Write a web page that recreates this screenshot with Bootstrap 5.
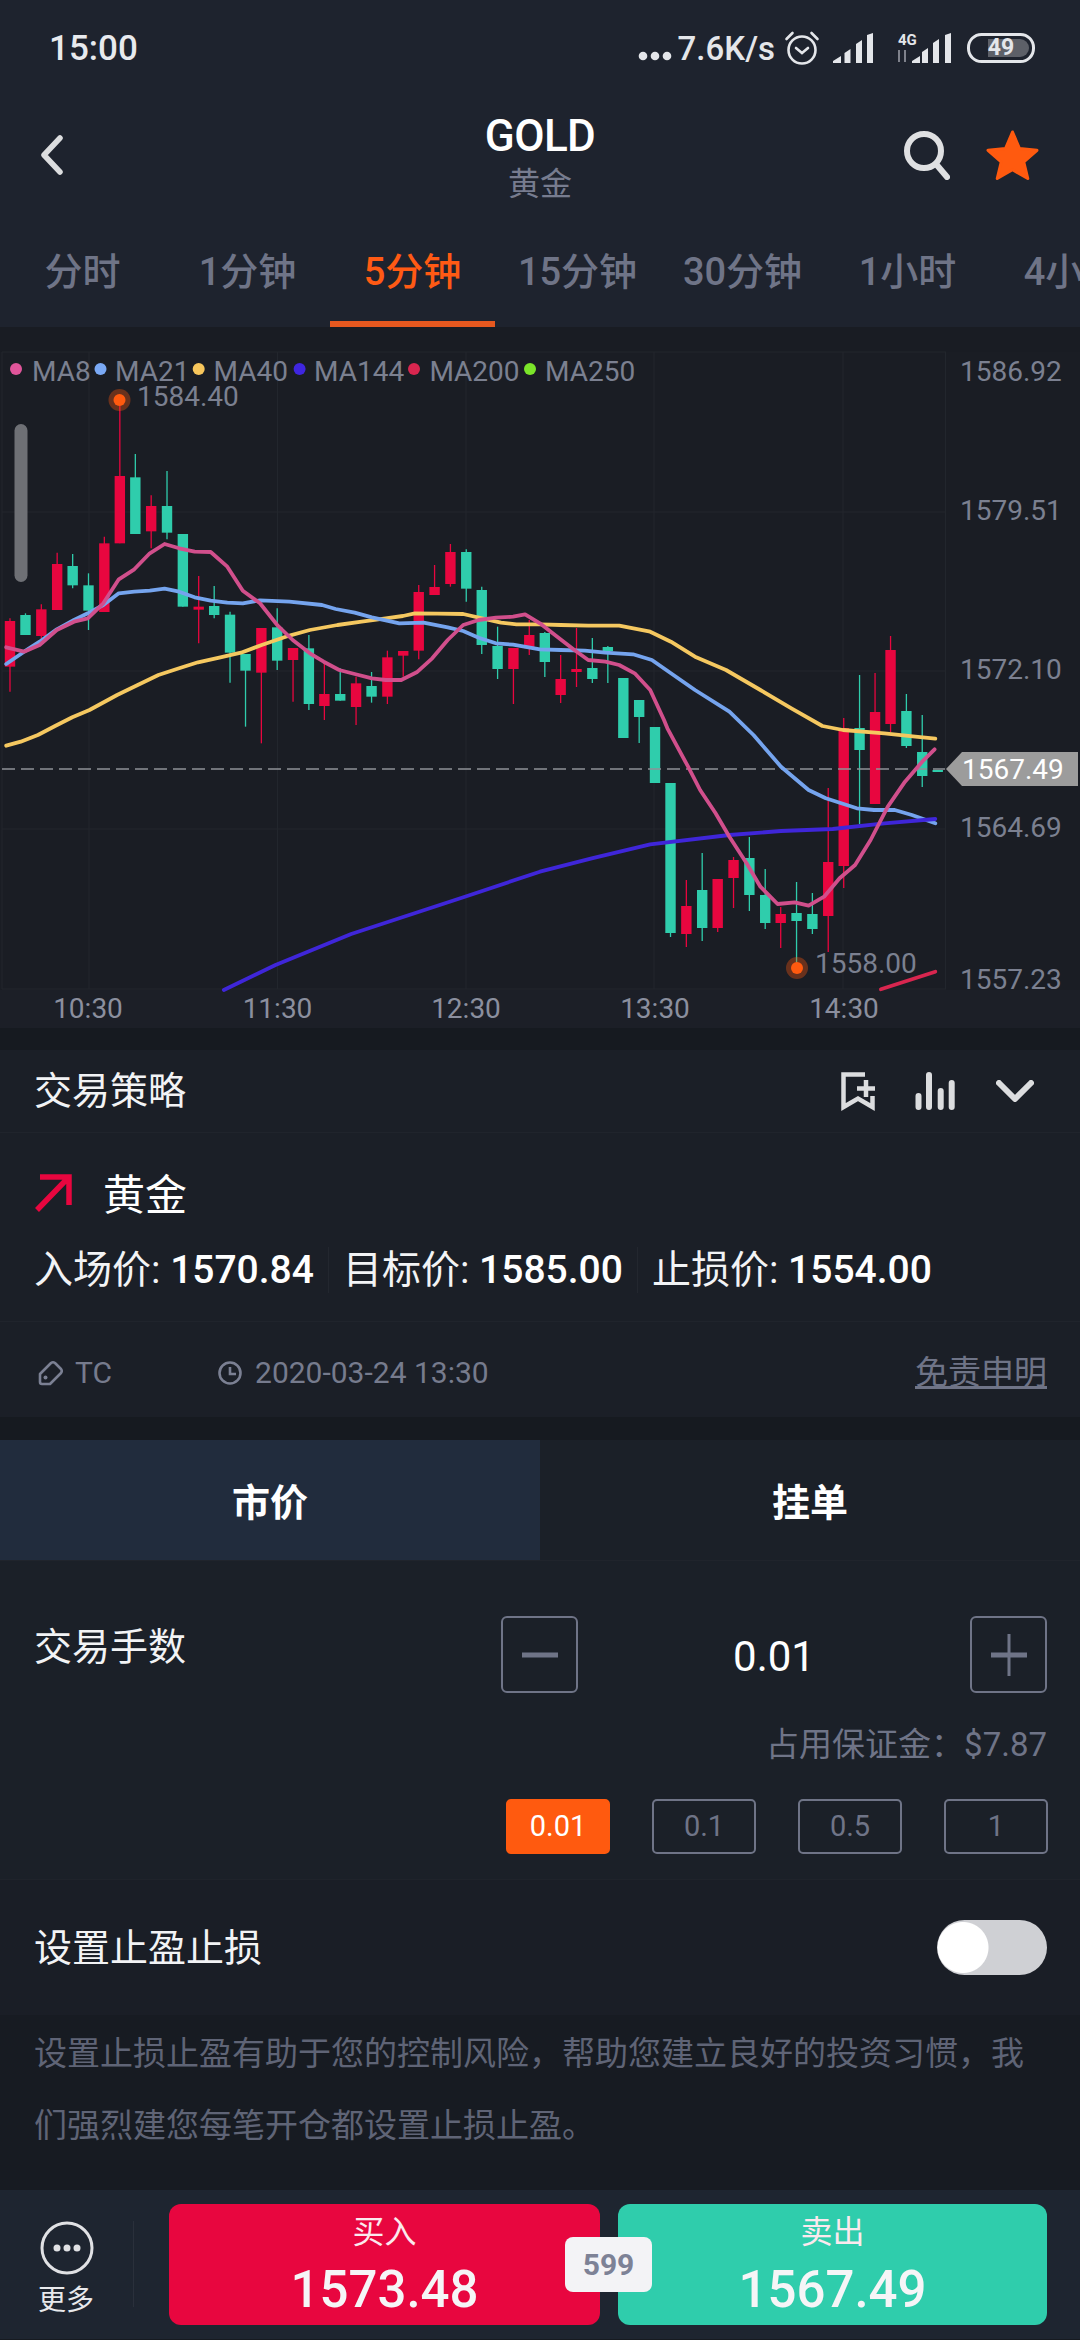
<!DOCTYPE html>
<html lang="zh-CN">
<head>
<meta charset="UTF-8">
<meta name="viewport" content="width=device-width, initial-scale=1.0">
<title>GOLD</title>
<link href="https://cdn.jsdelivr.net/npm/bootstrap@5.3.0/dist/css/bootstrap.min.css" rel="stylesheet">
<style>
    body {
        margin: 0;
        background: #161a20;
        font-family: Roboto, "Noto Sans CJK SC", sans-serif;
        color: #f2f3f5;
    }
    .app { width: 1080px; height: 2340px; overflow: hidden; }

    /* top */
    .top-area { background: #1e232e; height: 327px; }
    .status-row { height: 96px; padding: 0 45px 0 49px; }
    .clock-text { font-size: 35px; font-weight: 500; line-height: 1; color: #e8eaee; }
    .speed-text { font-size: 33px; font-weight: 500; line-height: 1; color: #e4e6ea; }
    .alarm-ico { margin-left: 9px; }
    .bars-ico { margin-left: 13px; }
    .net-ico { margin-left: 21px; }
    .batt-box { width: 68px; height: 30px; margin-left: 15px; position: relative; }
    .batt-num { position: absolute; top: 0; left: 0; width: 100%; text-align: center; font-size: 23px; line-height: 30px; font-weight: 700; color: #e4e6ea; }
    .title-row { height: 136px; padding: 0 41px 18px 40px; position: relative; }
    .title-main { position: absolute; left: 0; right: 0; top: 17px; text-align: center; }
    .gold-text { font-size: 44px; line-height: 46px; font-weight: 500; color: #fff; letter-spacing: -.6px; }
    .gold-sub { font-size: 32px; line-height: 48px; margin-top: 1px; color: #777c8f; }
    .title-tools { gap: 36px; position: relative; }
    .period-tab { width: 165px; flex: none; height: 95px; line-height: 81px; text-align: center; font-size: 38px; font-weight: 500; color: #6f7487; }
    .period-tab.on { color: #ff5a14; border-bottom: 6px solid #e6581f; }

    /* chart */
    .chart-box { background: #1a1d24; height: 701px; }
    .chart-box svg { display: block; }
    .chart-txt { font-family: Roboto, sans-serif; font-size: 28px; fill: #7b8090; }
    .chart-gap { height: 22px; }

    /* strategy */
    .plan-box { background: #1b1f27; }
    .plan-head { height: 83px; padding: 0 46px 0 34px; border-bottom: 1px solid #20242c; }
    .big-text { font-size: 38px; line-height: 46px; color: #f2f3f5; }
    .bars-tool { margin-left: 39px; }
    .down-tool { margin-left: 41px; }
    .plan-body { height: 189px; padding: 0 34px; border-bottom: 1px solid #20242c; }
    .plan-name { padding-top: 40px; height: 114px; }
    .plan-name b { font-size: 42px; line-height: 46px; font-weight: 400; color: #fff; margin-left: 31px; }
    .price-item { font-size: 39px; line-height: 46px; padding-right: 14px; margin-right: 14px; border-right: 1px solid #23272f; white-space: nowrap; }
    .price-item:last-child { border: 0; }
    .price-item b { font-weight: 500; color: #fff; }
    .plan-meta { height: 95px; padding: 6px 33px 0 37px; color: #767b8d; font-size: 30px; }
    .plan-meta a { color: #6f7487; font-size: 33px; }
    .meta-txt { margin-left: 12px; }
    .clock-ico { margin-left: 105px; }
    .gap-strip { height: 23px; }

    /* order */
    .order-tab { height: 121px; line-height: 126px; text-align: center; font-size: 38px; font-weight: 700; color: #fff; background: #1b2028; border-bottom: 1px solid #20242c; }
    .order-tab.on { background: #212c3d; }
    .order-box { height: 319px; background: #1b2028; padding: 55px 33px 0 34px; border-bottom: 1px solid #1f232b; position: relative; }
    .lots-label { padding-top: 8px; }
    .step-btn { width: 77px; height: 77px; padding: 0; border: 2px solid #6f7487; border-radius: 6px; display: flex; align-items: center; justify-content: center; background: transparent; }
    .lots-num { width: 392px; text-align: center; font-size: 42px; line-height: 82px; color: #fff; }
    .margin-line { font-size: 33px; line-height: 46px; color: #6f7487; text-align: right; margin-top: 24px; }
    .lot-chip { width: 104px; height: 55px; padding: 0; font-size: 29px; line-height: 51px; color: #6f7487; border: 2px solid #6f7487; border-radius: 5px; background: transparent; }
    .lot-chip.on { background: #ff5a0f; border-color: #ff5a0f; color: #fff; }
    .lot-chips { margin: 31px -1px 0 0; gap: 42px; }

    .stop-row { height: 135px; background: #1a1e26; padding: 0 33px 0 34px; }
    .stop-row .form-check-input { width: 110px; height: 55px; margin: 0; border: 0; float: none; background-color: #cfd0d4; background-image: radial-gradient(circle at 26px 50%, #fff 25px, transparent 26px); background-size: auto; }
    .stop-row .form-switch { padding: 0; min-height: 0; margin: 0; line-height: 0; }
    .stop-note { height: 175px; background: #171b22; padding: 3px 33px 0 34px; font-size: 33px; line-height: 72px; color: #5f6476; }

    /* bottom */
    .bottom-bar { height: 149px; background: #1e2530; padding: 14px 33px 0 0; position: relative; }
    .more-box { width: 134px; height: 86px; margin-top: 17px; border-right: 1px solid #2a303b; flex: none; text-align: center; }
    .more-box span { display: block; font-size: 28px; line-height: 34px; color: #e8e9ec; margin-top: 9px; padding-right: 1px; }
    .deal-btn { width: 431px; height: 121px; padding: 0; border: 0; border-radius: 12px; color: #fff; text-align: center; }
    .deal-btn small { display: block; font-size: 32px; line-height: 40px; margin-bottom: 10px; color: #fbe9ee; }
    .deal-btn b { display: block; font-size: 51px; line-height: 56px; font-weight: 500; color: #f5f5f7; }
    .buy-btn { background: #e8063f; margin-left: 35px; }
    .sell-btn { background: #2fcdac; width: 429px; margin-left: 18px; }
    .spread-tag { position: absolute; left: 565px; top: 47px; width: 87px; height: 55px; line-height: 55px; text-align: center; background: #f3f3f6; border-radius: 8px; color: #7d8296; font-size: 30px; font-weight: 700; }
</style>
</head>
<body>
<div class="app d-flex flex-column">

    <div class="top-area">
        <div class="status-row d-flex align-items-center justify-content-between">
            <span class="clock-text">15:00</span>
            <div class="d-flex align-items-center">
                <svg width="36" height="12" viewBox="0 0 36 12" class="me-1 mt-3"><circle cx="5" cy="6" r="4.300" fill="#e4e6ea"/><circle cx="17" cy="6" r="4.300" fill="#e4e6ea"/><circle cx="29" cy="6" r="4.300" fill="#e4e6ea"/></svg>
                <span class="speed-text">7.6K/s</span>
                <svg width="36" height="36" viewBox="0 0 36 36" class="alarm-ico" fill="none" stroke="#e4e6ea" stroke-width="2.600"><circle cx="18" cy="20" r="13.500"/><path d="M12 18l6 5 6-5M2.500 9l6-6M33.500 9l-6-6" stroke-linecap="round"/></svg>
                <svg width="40" height="30" viewBox="0 0 40 30" class="bars-ico" fill="#e4e6ea"><path d="M0 30v-2l8-5v7zM11.500 30V20l6-4v14zM23 30V11l6-4v23zM34 30V2l6-2v30z"/></svg>
                <svg width="58" height="32" viewBox="0 0 58 32" class="net-ico" fill="#e4e6ea"><text x="4" y="13" font-family="Roboto" font-size="15" font-weight="700" fill="#e4e6ea">4G</text><path d="M5 30V18M11 18v12" stroke="#7f828c" stroke-width="2"/><path d="M18 31v-2l8-5v7zM28 31V20l6-4v15zM39 31V11l6-4v24zM51 31V3l6-2v30z"/></svg>
                <div class="batt-box">
                    <svg width="68" height="30" viewBox="0 0 68 30" class="d-block"><rect x="1.500" y="1.500" width="65" height="27" rx="13" fill="none" stroke="#e4e6ea" stroke-width="3"/><path d="M21 6h32a9 9 0 0 1 0 18H21z" fill="#5d6068"/></svg>
                    <span class="batt-num">49</span>
                </div>
            </div>
        </div>
        <div class="title-row d-flex align-items-center justify-content-between">
            <svg width="24" height="40" viewBox="0 0 24 40" fill="none" stroke="#dcdddf" stroke-width="5.500" stroke-linecap="round" stroke-linejoin="round"><path d="M20 3L4 20l16 17"/></svg>
            <div class="title-main">
                <div class="gold-text">GOLD</div>
                <div class="gold-sub">黄金</div>
            </div>
            <div class="title-tools d-flex align-items-center">
                <svg width="47" height="50" viewBox="0 0 47 50" fill="none" stroke="#dfe0e2" stroke-width="6" stroke-linecap="round"><circle cx="21" cy="21" r="17"/><path d="M33 34l11 13"/></svg>
                <svg width="53" height="50" viewBox="0 0 53 50" fill="#ff5a0f" stroke="#ff5a0f" stroke-width="3" stroke-linejoin="round"><path d="M26.500 2l7 16.500 17.500 1.800-13.200 11.700 4 16.500-15.300-8.700-15.300 8.700 4-16.500L2 20.300l17.500-1.800z"/></svg>
            </div>
        </div>
        <div class="d-flex overflow-hidden">
            <div class="period-tab">分时</div>
            <div class="period-tab">1分钟</div>
            <div class="period-tab on">5分钟</div>
            <div class="period-tab">15分钟</div>
            <div class="period-tab">30分钟</div>
            <div class="period-tab">1小时</div>
            <div class="period-tab">4小时</div>
        </div>
    </div>

    <div class="chart-box">
        <svg id="chart" width="1080" height="701" viewBox="0 327 1080 701"></svg>
    </div>
    <div class="chart-gap"></div>

    <div class="plan-box">
        <div class="plan-head d-flex align-items-center justify-content-between">
            <span class="big-text">交易策略</span>
            <div class="d-flex align-items-center">
                <svg width="36" height="40" viewBox="0 0 36 40" fill="none" stroke="#dcdddf" stroke-width="4.500"><path d="M25 3.500H3.500V36L18 27.500 32.500 36V25"/><path d="M26 9v17M17 17.500h18"/></svg>
                <svg width="40" height="40" viewBox="0 0 40 40" class="bars-tool" fill="none" stroke="#dcdddf" stroke-width="6" stroke-linecap="round"><path d="M3.500 25v11M14 4v32M25.700 20v16M36.700 12v24"/></svg>
                <svg width="38" height="22" viewBox="0 0 38 22" class="down-tool" fill="none" stroke="#dcdddf" stroke-width="6" stroke-linecap="round" stroke-linejoin="round"><path d="M3 3l16 16L35 3"/></svg>
            </div>
        </div>
        <div class="plan-body">
            <div class="plan-name d-flex align-items-start">
                <svg width="38" height="40" viewBox="0 0 38 40" fill="none" stroke="#e8063f" stroke-width="5.500"><path d="M3 37L34 5M6 4h29v28"/></svg>
                <b>黄金</b>
            </div>
            <div class="d-flex">
                <span class="price-item">入场价: <b>1570.84</b></span>
                <span class="price-item">目标价: <b>1585.00</b></span>
                <span class="price-item">止损价: <b>1554.00</b></span>
            </div>
        </div>
        <div class="plan-meta d-flex align-items-center">
            <svg width="26" height="26" viewBox="0 0 26 26" fill="none" stroke="#7b8093" stroke-width="2.600" stroke-linejoin="round"><path d="M3 14L14 3q2-1.500 4 0l6 6q1.500 2 0 4L13 24H5q-2 0-2-2z"/><circle cx="8.500" cy="17.500" r="2" fill="#7b8093" stroke="none"/></svg>
            <span class="meta-txt">TC</span>
            <svg width="26" height="26" viewBox="0 0 26 26" class="clock-ico" fill="none" stroke="#7b8093" stroke-width="2.600"><circle cx="13" cy="13" r="10.500"/><path d="M13 7v7h6"/></svg>
            <span class="meta-txt flex-grow-1">2020-03-24 13:30</span>
            <a href="#">免责申明</a>
        </div>
    </div>
    <div class="gap-strip"></div>

    <div class="row g-0">
        <div class="col-6"><div class="order-tab on">市价</div></div>
        <div class="col-6"><div class="order-tab">挂单</div></div>
    </div>

    <div class="order-box">
        <div class="d-flex justify-content-between align-items-start">
            <span class="big-text lots-label">交易手数</span>
            <div class="d-flex">
                <button class="step-btn" type="button"><svg width="40" height="40" viewBox="0 0 40 40" stroke="#6f7487" stroke-width="5"><path d="M2 20h36"/></svg></button>
                <div class="lots-num">0.01</div>
                <button class="step-btn" type="button"><svg width="40" height="44" viewBox="0 0 40 44" stroke="#6f7487" fill="none"><path d="M2 22h36" stroke-width="5"/><path d="M20 1v42" stroke-width="3"/></svg></button>
            </div>
        </div>
        <div class="margin-line">占用保证金：$7.87</div>
        <div class="lot-chips d-flex justify-content-end">
            <button class="btn lot-chip on" type="button">0.01</button>
            <button class="btn lot-chip" type="button">0.1</button>
            <button class="btn lot-chip" type="button">0.5</button>
            <button class="btn lot-chip" type="button">1</button>
        </div>
    </div>

    <div class="stop-row d-flex align-items-center justify-content-between">
        <span class="big-text">设置止盈止损</span>
        <div class="form-check form-switch">
            <input class="form-check-input" type="checkbox" role="switch">
        </div>
    </div>
    <div class="stop-note">设置止损止盈有助于您的控制风险，帮助您建立良好的投资习惯，我们强烈建您每笔开仓都设置止损止盈。</div>

    <div class="bottom-bar d-flex">
        <div class="more-box">
            <svg width="54" height="54" viewBox="0 0 54 54" fill="none" stroke="#e0e1e4" stroke-width="3"><circle cx="27" cy="27" r="25"/><g fill="#e0e1e4" stroke="none"><circle cx="17" cy="27" r="3.500"/><circle cx="27" cy="27" r="3.500"/><circle cx="37" cy="27" r="3.500"/></g></svg>
            <span>更多</span>
        </div>
        <button class="deal-btn buy-btn" type="button"><small>买入</small><b>1573.48</b></button>
        <button class="deal-btn sell-btn" type="button"><small>卖出</small><b>1567.49</b></button>
        <div class="spread-tag">599</div>
    </div>
</div>

<script src="https://cdn.jsdelivr.net/npm/bootstrap@5.3.0/dist/js/bootstrap.bundle.min.js"></script>
<script>
    var RED = '#e8063f', GREEN = '#2fcdac';

    // points were read off zoomed crops, so these put them back on the page
    function left(x, y) { return [x / 2.904, 340 + y / 3]; }
    function right(x, y) { return [540 + x / 2.904, 340 + y / 3]; }
    function leftLow(x, y) { return [x / 2.904, 700 + y / 3]; }
    function rightLow(x, y) { return [540 + x / 2.904, 700 + y / 3]; }

    function mapPts(fn, list) {
        return list.map(function (p) { return fn(p[0], p[1]); });
    }

    // x, bodyTop, bodyBottom, wickTop, wickBottom, red?
    var leftCandles = [
        [29,843,980,835,1055,1],[74,825,885,820,885,0],[120,808,888,793,900,1],[166,672,810,638,810,1],
        [211,678,736,642,745,0],[257,736,812,700,870,0],[303,610,816,590,816,1],[348,408,610,180,610,1],
        [393,412,582,342,582,0],[439,498,574,466,625,1],[485,498,578,393,598,0],[531,582,800,582,800,0],
        [577,800,809,708,910,1],[622,798,825,738,835,0],[668,824,938,815,1028,0],[713,942,992,942,1160,0],
        [759,864,998,864,1210,1],[805,862,962,805,990,0],[851,924,960,924,1085,1],[897,925,1092,885,1110,0],
        [942,1062,1098,970,1140,1],[988,1062,1082,985,1082,0],[1034,1030,1101,1010,1155,1],[1079,1038,1070,996,1088,0],
        [1125,952,1070,932,1092,1],[1171,933,947,933,1010,1],[1216,756,932,735,958,1],[1262,741,765,675,765,1],
        [1308,636,732,612,740,1],[1354,636,746,628,785,0],[1399,750,915,740,942,0],[1445,918,987,860,1017,0],
        [1491,924,987,924,1092,1],[1537,885,925,840,945,1]
    ];
    // same, but x from the right crop and y already in page pixels
    var rightCandles = [
        [14,633,662,632,677,0],[60,679,695,655,703,1],[106,669,672,628,687,1],[152,668,679,638,683,0],
        [197,647,651,646,683,0],[242,678,738,678,738,0],[288,700,717,700,743,0],[334,727,783,727,783,0],
        [379,783,933,783,937,0],[425,906,934,880,947,1],[471,890,928,853,941,0],[516,879,928,879,932,1],
        [562,860,878,857,908,1],[608,858,895,837,911,0],[654,895,923,869,929,0],[699,914,923,907,948,1],
        [745,913,921,882,963,0],[791,914,929,893,934,0],[837,862,916,788,952,1],[882,728,866,718,888,1],
        [928,728,750,675,824,0],[973,712,804,673,804,1],[1018,650,724,636,732,1],[1064,711,746,694,748,0],
        [1110,752,776,715,787,0],[1155,770,772,770,772,0]
    ];

    var ma8 = mapPts(left, [[18,922],[70,935],[115,915],[165,870],[215,845],[255,835],[300,790],[345,718],[390,688],[435,640],[478,612],[520,625],[565,635],[612,636],[660,680],[705,752],[755,790],[805,855],[850,900],[900,940],[940,965],[985,990],[1030,1002],[1080,1015],[1120,1020],[1165,1020],[1210,997],[1255,955],[1300,900],[1345,855],[1390,840],[1440,833],[1490,830],[1525,823],[1568,850]])
        .concat(mapPts(right, [[50,890],[100,930],[140,960],[190,965],[230,975],[275,1000],[320,1050],[360,1140]]))
        .concat(mapPts(rightLow, [[370,85],[430,200],[465,270],[510,340],[550,410],[600,490],[640,560],[690,612],[740,607],[780,617],[825,590],[870,535],[915,495],[960,420],[1010,320],[1060,245],[1110,185],[1146,148]]));
    var ma21 = mapPts(left, [[18,972],[70,935],[115,905],[165,868],[215,840],[255,820],[300,795],[345,760],[390,755],[435,752],[478,746],[520,755],[565,772],[612,782],[660,788],[705,790],[755,781],[840,785],[935,795],[975,807],[1030,818],[1080,832],[1160,850],[1230,848],[1300,862],[1345,873],[1390,893],[1440,910],[1490,914],[1568,928]])
        .concat(mapPts(right, [[60,930],[130,932],[190,938],[270,943],[325,960],[380,1000],[450,1050],[550,1115]]))
        .concat(mapPts(rightLow, [[550,35],[620,105],[700,200],[780,270],[830,295],[920,325],[970,330],[1030,330],[1080,345],[1148,370]]));
    var ma40 = mapPts(leftLow, [[18,137],[60,125],[110,105],[160,78],[210,52],[260,30]])
        .concat(mapPts(left, [[340,1065],[400,1035],[460,1005],[520,985],[575,967],[640,952],[700,938],[760,915],[830,890],[900,870],[980,855],[1050,845],[1120,835],[1170,828],[1205,820],[1270,821],[1345,822],[1400,835],[1455,848],[1500,853],[1568,853]]))
        .concat(mapPts(right, [[60,855],[140,857],[230,857],[320,875],[380,905],[450,950],[540,990],[640,1050],[730,1105],[820,1158],[880,1170],[1000,1180],[1090,1190],[1148,1196]]));
    var ma144 = mapPts(leftLow, [[650,870],[800,795],[1020,702],[1350,590],[1568,515]])
        .concat(mapPts(rightLow, [[150,475],[320,433],[550,405],[700,393],[850,387],[1000,370],[1148,357]]));
    var ma200 = mapPts(rightLow, [[990,868],[1148,815]]);

    function line(x1, y1, x2, y2, color, w, extra) {
        return '<line x1="' + x1 + '" y1="' + y1 + '" x2="' + x2 + '" y2="' + y2 + '" stroke="' + color + '" stroke-width="' + w + '" ' + (extra || '') + '/>';
    }
    function label(x, y, str, anchor, fill) {
        return '<text class="chart-txt" x="' + x + '" y="' + y + '"' + (anchor ? ' text-anchor="' + anchor + '"' : '') + (fill ? ' style="fill:' + fill + '"' : '') + '>' + str + '</text>';
    }
    function candle(x, c) {
        var color = c[5] ? RED : GREEN;
        return line(x, c[3], x, c[4], color, 1.3) +
            '<rect x="' + (x - 5.2) + '" y="' + c[1] + '" width="10.400" height="' + (c[2] - c[1]) + '" fill="' + color + '"/>';
    }
    function maLine(pts, color) {
        return '<polyline points="' + pts.map(function (p) { return p[0].toFixed(1) + ',' + p[1].toFixed(1); }).join(' ') +
            '" fill="none" stroke="' + color + '" stroke-width="3.800" stroke-linejoin="round" stroke-linecap="round"/>';
    }

    var html = '<rect x="0" y="327" width="1080" height="25" fill="#191c23"/>';

    // grid
    [2, 89, 277.5, 466, 654, 843, 945.5].forEach(function (x) { html += line(x, 352, x, 989, '#22262d', 1); });
    [352, 512, 671, 829, 989].forEach(function (y) { html += line(2, y, 946, y, '#22262d', 1); });
    html += '<rect x="0" y="990" width="1080" height="38" fill="#1c1f27"/>';

    // candles
    leftCandles.forEach(function (c) {
        var x = c[0] / 2.904;
        html += candle(x, [0, 340 + c[1] / 3, 340 + c[2] / 3, 340 + c[3] / 3, 340 + c[4] / 3, c[5]]);
    });
    rightCandles.forEach(function (c) { html += candle(540 + c[0] / 2.904, c); });

    // last price line, under the averages
    html += line(2, 769, 945, 769, '#8f9196', 1.400, 'stroke-dasharray="13 6"');

    html += maLine(ma40, '#f5c860') + maLine(ma21, '#75a4ee') + maLine(ma144, '#3f26d9') + maLine(ma8, '#d14f8c') + maLine(ma200, '#d8264f');

    // scroll handle
    html += '<rect x="14.500" y="424" width="13" height="158" rx="6.500" fill="#6e7075"/>';

    // legend
    [[16, 32, '#e0559a', 'MA8'], [100.5, 115, '#7aa9f5', 'MA21'], [198.7, 213.5, '#f7c65c', 'MA40'],
     [299.6, 314, '#3f26e0', 'MA144'], [414, 429.4, '#d8264f', 'MA200'], [530, 545, '#7be52a', 'MA250']].forEach(function (m) {
        html += '<circle cx="' + m[0] + '" cy="369" r="6" fill="' + m[2] + '"/>' + label(m[1], 381, m[3]);
    });

    // high and low markers
    [[119.5, 400], [797, 968]].forEach(function (d) {
        html += '<circle cx="' + d[0] + '" cy="' + d[1] + '" r="11" fill="#ff5a0f" fill-opacity=".35"/><circle cx="' + d[0] + '" cy="' + d[1] + '" r="6" fill="#ff5a0f"/>';
    });
    html += label(137, 406, '1584.40') + label(815, 973, '1558.00');

    // price axis
    [[381, '1586.92'], [520, '1579.51'], [679, '1572.10'], [837, '1564.69'], [989, '1557.23']].forEach(function (a) {
        html += label(960, a[0], a[1]);
    });
    html += '<polygon points="946,769 962,752 1078,752 1078,786 962,786" fill="#9c9c9c"/>' + label(962, 779, '1567.49', '', '#fff');

    // time axis
    [[88, '10:30'], [277.5, '11:30'], [466, '12:30'], [655, '13:30'], [844, '14:30']].forEach(function (a) {
        html += label(a[0], 1018, a[1], 'middle', '#8b8f9e');
    });

    document.getElementById('chart').innerHTML = html;
</script>
</body>
</html>
